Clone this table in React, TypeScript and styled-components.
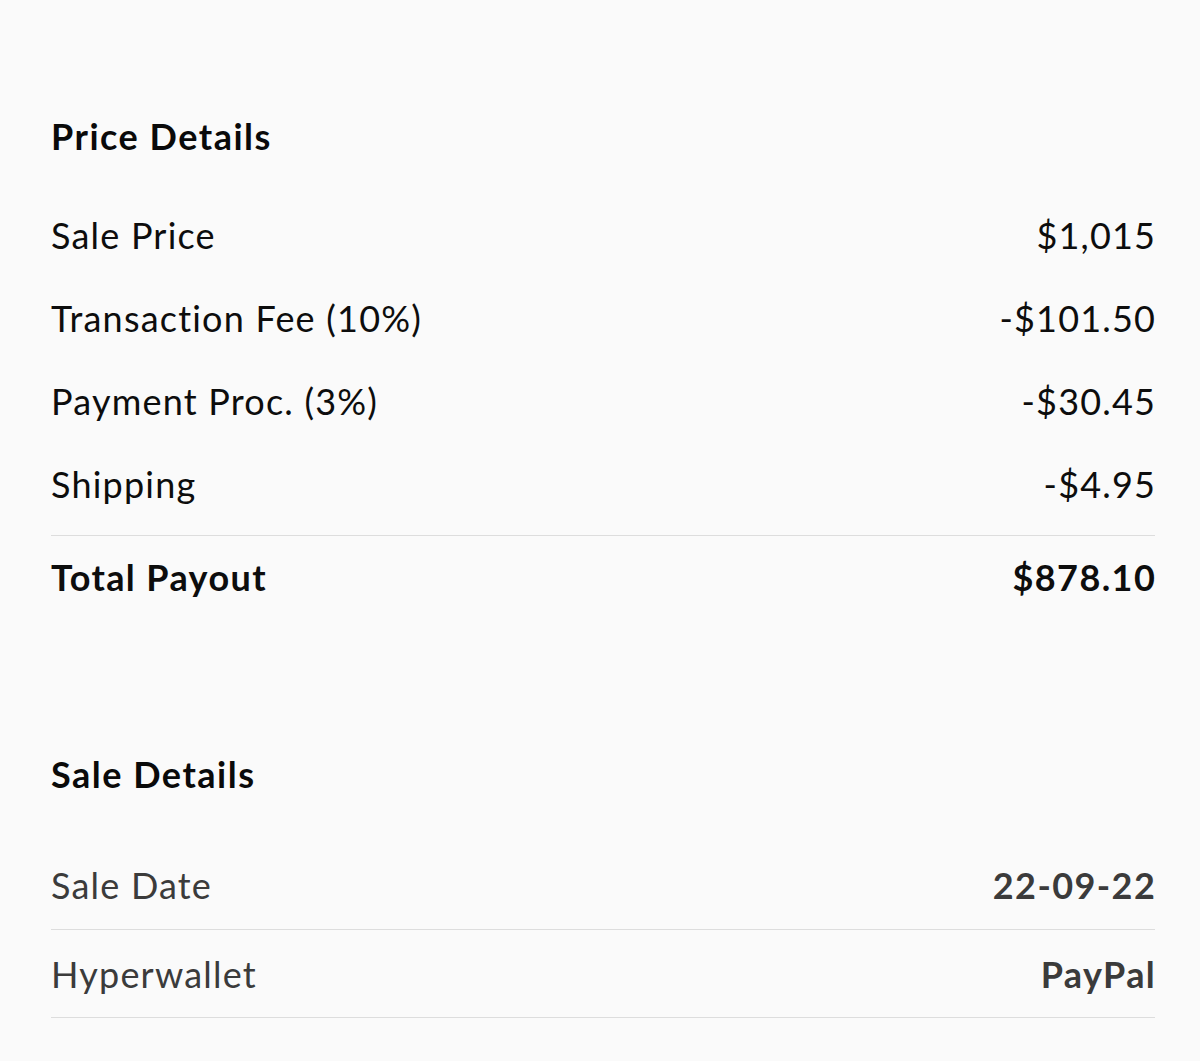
import React from "react";
import styled, { createGlobalStyle } from "styled-components";

const Global = createGlobalStyle`
  html, body { margin: 0; padding: 0; background: #fafafa; }
  body { font-family: Lato, "Open Sans", sans-serif; -webkit-font-smoothing: antialiased; }
`;

const Page = styled.div`
  display: flex;
  flex-direction: column;
  padding: 114px 45px 0 51px;
  min-height: 1061px;
  box-sizing: border-box;
  background: #fafafa;
`;

const Section = styled.section<{ $gapAfter?: number }>`
  display: flex;
  flex-direction: column;
  margin-bottom: ${(p) => p.$gapAfter ?? 0}px;
`;

const Heading = styled.h2`
  margin: 0;
  height: 44px;
  line-height: 44px;
  font-size: 36px;
  font-weight: 700;
  letter-spacing: 1.5px;
  color: #0a0a0a;
`;

const Rows = styled.div<{ $top: number }>`
  display: flex;
  flex-direction: column;
  margin-top: ${(p) => p.$top}px;
`;

const Row = styled.div<{ $h: number; $line?: boolean; $tone?: "dark" | "muted"; $bold?: boolean }>`
  display: flex;
  justify-content: space-between;
  align-items: center;
  box-sizing: border-box;
  height: ${(p) => p.$h}px;
  font-size: 36px;
  letter-spacing: ${(p) => (p.$bold ? 1.4 : 1.2)}px;
  font-weight: ${(p) => (p.$bold ? 700 : 400)};
  color: ${(p) => (p.$tone === "muted" ? "#3b3b3b" : "#0d0d0d")};
  border-bottom: ${(p) => (p.$line ? "1px solid #dddddd" : "none")};
`;

const Value = styled.span<{ $bold?: boolean }>`
  font-weight: ${(p) => (p.$bold ? 700 : "inherit")};
  letter-spacing: ${(p) => (p.$bold ? "1.4px" : "inherit")};
  margin-right: -1.2px;
`;

const Divider = styled.div`
  margin-top: 10px;
  height: 1px;
  background: #dddddd;
`;

const priceRows = [
  ["Sale Price", "$1,015"],
  ["Transaction Fee (10%)", "-$101.50"],
  ["Payment Proc. (3%)", "-$30.45"],
  ["Shipping", "-$4.95"],
];

export default function App() {
  return (
    <>
      <Global />
      <Page>
        <Section $gapAfter={134}>
          <Heading>Price Details</Heading>
          <Rows $top={35}>
            {priceRows.map(([l, v]) => (
              <Row key={l} $h={83}>
                <span>{l}</span>
                <Value>{v}</Value>
              </Row>
            ))}
            <Divider />
            <Row $h={82} $bold>
              <span>Total Payout</span>
              <Value>$878.10</Value>
            </Row>
          </Rows>
        </Section>
        <Section>
          <Heading>Sale Details</Heading>
          <Rows $top={45}>
            <Row $h={89} $line $tone="muted">
              <span>Sale Date</span>
              <Value $bold>22-09-22</Value>
            </Row>
            <Row $h={88} $line $tone="muted">
              <span>Hyperwallet</span>
              <Value $bold>PayPal</Value>
            </Row>
          </Rows>
        </Section>
      </Page>
    </>
  );
}
